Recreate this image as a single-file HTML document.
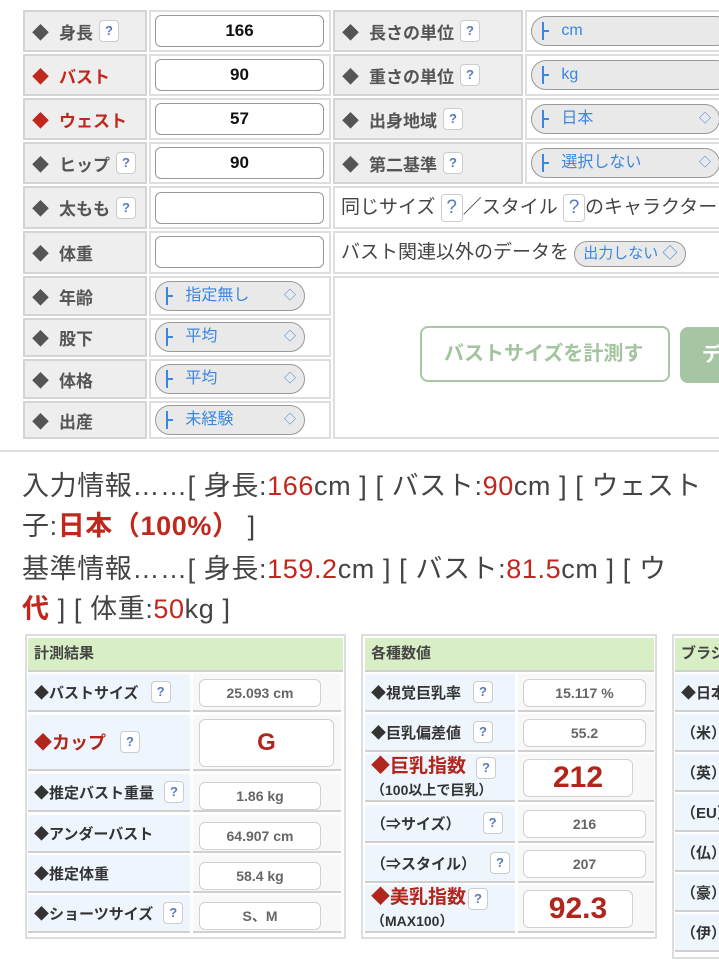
<!DOCTYPE html>
<html><head><meta charset="utf-8"><style>
*{margin:0;padding:0;box-sizing:border-box}
body{width:719px;height:962px;overflow:hidden;background:#fff;position:relative;font-family:"Liberation Sans","Noto Sans CJK JP",sans-serif}
.a{position:absolute}
.lab{position:absolute;background:#eee;border:2px solid #d4d4d4;font-weight:bold;color:#555;font-size:17px;display:flex;align-items:center;padding-left:7px;white-space:nowrap;overflow:hidden}
.lab.r{color:#c0281e}
.d{font-size:17px;margin-right:10px}
.cell{position:absolute;border:2px solid #dedede;background:#fff}
.q{display:inline-block;width:20px;height:22px;border:1px solid #ccc;border-radius:4px;background:#fff;color:#5a7ab8;font-size:13px;text-align:center;line-height:20px;margin-left:6px;font-weight:bold}
.inp{position:absolute;border:1.5px solid #999;border-radius:6px;background:#fff;text-align:center;font-weight:bold;font-size:17px;line-height:29px;color:#111}
.sel{position:absolute;border:1.5px solid #999;border-radius:16px;background:#e9e9e9;color:#3a86e0;font-size:16px;line-height:27px;padding-left:10px;white-space:nowrap;overflow:hidden}
.sel .bar{display:inline-block;width:2px;height:18px;background:#3a86e0;vertical-align:middle;margin-right:4px;position:relative}
.sel .bar:after{content:"";position:absolute;left:2px;top:8px;width:5px;height:2px;background:#3a86e0}
.sel .ar{position:absolute;right:8px;top:0;font-size:12px}
.txt{position:absolute;left:22px;font-size:27px;letter-spacing:0.6px;color:#444;white-space:nowrap;line-height:41px}
.txt b{color:#c0281e;font-weight:normal}
.tb{position:absolute;border:2px solid #ddd;background:#fff}
.hd{position:absolute;background:#d8efc6;border-bottom:2px solid #cfcfcf;font-size:15px;font-weight:bold;color:#444;padding-left:6px;line-height:32px;white-space:nowrap;overflow:hidden}
.tl{position:absolute;background:#eef5fd;border-bottom:2px solid #cfcfcf;font-size:15px;font-weight:bold;color:#333;display:flex;align-items:center;padding-left:6px;white-space:nowrap;overflow:hidden}
.tv{position:absolute;background:#f8f8f8;border-bottom:2px solid #cfcfcf}
.vb{position:absolute;border:1.5px solid #d0d0d0;border-radius:6px;background:#fff;text-align:center;font-weight:bold;color:#666;font-size:14px}
</style></head><body>

<div class="lab" style="left:23px;top:10px;width:124px;height:42px"><span class="d">◆</span>身長<span class="q">?</span></div>
<div class="lab r" style="left:23px;top:54px;width:124px;height:42px"><span class="d">◆</span>バスト</div>
<div class="lab r" style="left:23px;top:98px;width:124px;height:42px"><span class="d">◆</span>ウェスト</div>
<div class="lab" style="left:23px;top:142px;width:124px;height:42px"><span class="d">◆</span>ヒップ<span class="q">?</span></div>
<div class="lab" style="left:23px;top:186px;width:124px;height:43px"><span class="d">◆</span>太もも<span class="q">?</span></div>
<div class="lab" style="left:23px;top:231px;width:124px;height:43px"><span class="d">◆</span>体重</div>
<div class="lab" style="left:23px;top:276px;width:124px;height:40px"><span class="d">◆</span>年齢</div>
<div class="lab" style="left:23px;top:318px;width:124px;height:39px"><span class="d">◆</span>股下</div>
<div class="lab" style="left:23px;top:359px;width:124px;height:40px"><span class="d">◆</span>体格</div>
<div class="lab" style="left:23px;top:401px;width:124px;height:38px"><span class="d">◆</span>出産</div>

<div class="cell" style="left:149px;top:10px;width:182px;height:42px"></div>
<div class="cell" style="left:149px;top:54px;width:182px;height:42px"></div>
<div class="cell" style="left:149px;top:98px;width:182px;height:42px"></div>
<div class="cell" style="left:149px;top:142px;width:182px;height:42px"></div>
<div class="cell" style="left:149px;top:186px;width:182px;height:43px"></div>
<div class="cell" style="left:149px;top:231px;width:182px;height:43px"></div>
<div class="cell" style="left:149px;top:276px;width:182px;height:40px"></div>
<div class="cell" style="left:149px;top:318px;width:182px;height:39px"></div>
<div class="cell" style="left:149px;top:359px;width:182px;height:40px"></div>
<div class="cell" style="left:149px;top:401px;width:182px;height:38px"></div>
<div class="inp" style="left:155px;top:15px;width:169px;height:32px">166</div>
<div class="inp" style="left:155px;top:59px;width:169px;height:32px">90</div>
<div class="inp" style="left:155px;top:103px;width:169px;height:32px">57</div>
<div class="inp" style="left:155px;top:147px;width:169px;height:32px">90</div>
<div class="inp" style="left:155px;top:192px;width:169px;height:32px"></div>
<div class="inp" style="left:155px;top:236px;width:169px;height:32px"></div>
<div class="sel" style="left:155px;top:281px;width:150px;height:30px"><span class="bar"></span>&nbsp;&nbsp;&nbsp;指定無し<span class="ar">◇</span></div>
<div class="sel" style="left:155px;top:322px;width:150px;height:30px"><span class="bar"></span>&nbsp;&nbsp;&nbsp;平均<span class="ar">◇</span></div>
<div class="sel" style="left:155px;top:364px;width:150px;height:30px"><span class="bar"></span>&nbsp;&nbsp;&nbsp;平均<span class="ar">◇</span></div>
<div class="sel" style="left:155px;top:405px;width:150px;height:30px"><span class="bar"></span>&nbsp;&nbsp;&nbsp;未経験<span class="ar">◇</span></div>

<div class="lab" style="left:333px;top:10px;width:190px;height:42px"><span class="d">◆</span>長さの単位<span class="q">?</span></div>
<div class="lab" style="left:333px;top:54px;width:190px;height:42px"><span class="d">◆</span>重さの単位<span class="q">?</span></div>
<div class="lab" style="left:333px;top:98px;width:190px;height:42px"><span class="d">◆</span>出身地域<span class="q">?</span></div>
<div class="lab" style="left:333px;top:142px;width:190px;height:42px"><span class="d">◆</span>第二基準<span class="q">?</span></div>
<div class="cell" style="left:525px;top:10px;width:200px;height:42px"></div>
<div class="cell" style="left:525px;top:54px;width:200px;height:42px"></div>
<div class="cell" style="left:525px;top:98px;width:200px;height:42px"></div>
<div class="cell" style="left:525px;top:142px;width:200px;height:42px"></div>
<div class="sel" style="left:531px;top:16px;width:200px;height:30px"><span class="bar"></span>&nbsp;&nbsp;&nbsp;cm</div>
<div class="sel" style="left:531px;top:60px;width:200px;height:30px"><span class="bar"></span>&nbsp;&nbsp;&nbsp;kg</div>
<div class="sel" style="left:531px;top:104px;width:189px;height:30px"><span class="bar"></span>&nbsp;&nbsp;&nbsp;日本<span class="ar">◇</span></div>
<div class="sel" style="left:531px;top:148px;width:189px;height:30px"><span class="bar"></span>&nbsp;&nbsp;&nbsp;選択しない<span class="ar">◇</span></div>
<div class="cell" style="left:333px;top:186px;width:392px;height:43px;font-size:19px;color:#444;line-height:39px;padding-left:6px;white-space:nowrap">同じサイズ <span style="display:inline-block;border:1px solid #ccc;border-radius:4px;width:22px;text-align:center;line-height:26px;color:#5a7ab8">?</span>／スタイル <span style="display:inline-block;border:1px solid #ccc;border-radius:4px;width:22px;text-align:center;line-height:26px;color:#5a7ab8">?</span>のキャラクター</div>
<div class="cell" style="left:333px;top:231px;width:392px;height:43px;font-size:19px;color:#444;line-height:39px;padding-left:6px;white-space:nowrap">バスト関連以外のデータを <span style="display:inline-block;border:1.5px solid #999;border-radius:14px;background:#e9e9e9;color:#3a86e0;font-size:15px;line-height:24px;padding:0 8px">出力しない ◇</span></div>
<div class="cell" style="left:333px;top:276px;width:392px;height:163px"></div>
<div class="a" style="left:420px;top:326px;width:250px;height:56px;border:2px solid #a8c8a4;border-radius:8px;color:#a3c49f;font-weight:bold;font-size:20px;line-height:52px;padding-left:22px;white-space:nowrap;overflow:hidden;background:#fff">バストサイズを計測す</div>
<div class="a" style="left:680px;top:327px;width:60px;height:56px;background:#a6c5a2;border-radius:8px;color:#fff;font-weight:bold;font-size:20px;line-height:56px;padding-left:22px">デ</div>

<div class="a" style="left:0;top:450px;width:719px;height:2px;background:#ddd"></div>
<div class="txt" style="top:466px">入力情報……[ 身長:<b>166</b>cm ] [ バスト:<b>90</b>cm ] [ ウェスト</div>
<div class="txt" style="top:506px">子:<b style="font-weight:bold">日本（100%）</b> ]</div>
<div class="txt" style="top:549px">基準情報……[ 身長:<b>159.2</b>cm ] [ バスト:<b>81.5</b>cm ] [ ウ</div>
<div class="txt" style="top:589px"><b style="font-weight:bold">代</b> ] [ 体重:<b>50</b>kg ]</div>

<div class="tb" style="left:25px;top:634px;width:321px;height:305px"></div>
<div class="hd" style="left:28px;top:638px;width:315px;height:34px">計測結果</div>
<div class="tl" style="left:28px;top:674px;width:162px;height:38px">◆バストサイズ<span class="q" style="margin-left:12px">?</span></div>
<div class="tv" style="left:193px;top:674px;width:148px;height:38px"></div>
<div class="vb" style="left:199px;top:679px;width:122px;height:28px;line-height:26px">25.093 cm</div>
<div class="tl" style="left:28px;top:715px;width:162px;height:56px;color:#b0261c;font-size:18px">◆カップ<span class="q" style="margin-left:14px">?</span></div>
<div class="tv" style="left:193px;top:715px;width:148px;height:56px"></div>
<div class="vb" style="left:199px;top:719px;width:135px;height:48px;line-height:46px;color:#b0261c;font-size:24px">G</div>
<div class="tl" style="left:28px;top:774px;width:162px;height:38px">◆推定バスト重量<span class="q" style="margin-left:10px">?</span></div>
<div class="tv" style="left:193px;top:774px;width:148px;height:38px"></div>
<div class="vb" style="left:199px;top:782px;width:122px;height:28px;line-height:26px">1.86 kg</div>
<div class="tl" style="left:28px;top:815px;width:162px;height:38px">◆アンダーバスト</div>
<div class="tv" style="left:193px;top:815px;width:148px;height:38px"></div>
<div class="vb" style="left:199px;top:822px;width:122px;height:28px;line-height:26px">64.907 cm</div>
<div class="tl" style="left:28px;top:855px;width:162px;height:38px">◆推定体重</div>
<div class="tv" style="left:193px;top:855px;width:148px;height:38px"></div>
<div class="vb" style="left:199px;top:862px;width:122px;height:28px;line-height:26px">58.4 kg</div>
<div class="tl" style="left:28px;top:895px;width:162px;height:38px">◆ショーツサイズ<span class="q" style="margin-left:10px">?</span></div>
<div class="tv" style="left:193px;top:895px;width:148px;height:38px"></div>
<div class="vb" style="left:199px;top:902px;width:122px;height:28px;line-height:26px">S、M</div>

<div class="tb" style="left:361px;top:634px;width:296px;height:305px"></div>
<div class="hd" style="left:365px;top:638px;width:289px;height:34px">各種数値</div>
<div class="tl" style="left:365px;top:674px;width:150px;height:38px">◆視覚巨乳率<span class="q" style="margin-left:12px">?</span></div>
<div class="tv" style="left:518px;top:674px;width:136px;height:38px"></div>
<div class="vb" style="left:523px;top:679px;width:123px;height:28px;line-height:26px">15.117 %</div>
<div class="tl" style="left:365px;top:714px;width:150px;height:38px">◆巨乳偏差値<span class="q" style="margin-left:12px">?</span></div>
<div class="tv" style="left:518px;top:714px;width:136px;height:38px"></div>
<div class="vb" style="left:523px;top:719px;width:123px;height:28px;line-height:26px">55.2</div>
<div class="tl" style="left:365px;top:754px;width:150px;height:48px;display:block;padding-top:2px;line-height:22px"><span style="color:#b0261c;font-size:19px">◆巨乳指数</span><span class="q" style="margin-left:10px">?</span><br><span style="font-size:14px">（100以上で巨乳）</span></div>
<div class="tv" style="left:518px;top:754px;width:136px;height:48px"></div>
<div class="vb" style="left:523px;top:759px;width:110px;height:38px;line-height:36px;color:#b0261c;font-size:30px">212</div>
<div class="tl" style="left:365px;top:805px;width:150px;height:38px">（⇒サイズ）<span class="q" style="margin-left:22px">?</span></div>
<div class="tv" style="left:518px;top:805px;width:136px;height:38px"></div>
<div class="vb" style="left:523px;top:810px;width:123px;height:28px;line-height:26px">216</div>
<div class="tl" style="left:365px;top:845px;width:150px;height:38px">（⇒スタイル）<span class="q" style="margin-left:14px">?</span></div>
<div class="tv" style="left:518px;top:845px;width:136px;height:38px"></div>
<div class="vb" style="left:523px;top:850px;width:123px;height:28px;line-height:26px">207</div>
<div class="tl" style="left:365px;top:885px;width:150px;height:48px;display:block;padding-top:2px;line-height:22px"><span style="color:#b0261c;font-size:19px">◆美乳指数</span><span class="q" style="margin-left:2px">?</span><br><span style="font-size:14px">（MAX100）</span></div>
<div class="tv" style="left:518px;top:885px;width:136px;height:48px"></div>
<div class="vb" style="left:523px;top:890px;width:110px;height:38px;line-height:36px;color:#b0261c;font-size:30px">92.3</div>

<div class="tb" style="left:672px;top:634px;width:60px;height:325px"></div>
<div class="hd" style="left:675px;top:638px;width:50px;height:34px">ブラジャー</div>
<div class="tl" style="left:675px;top:674px;width:50px;height:38px">◆日本</div>
<div class="tl" style="left:675px;top:714px;width:50px;height:38px">（米）</div>
<div class="tl" style="left:675px;top:754px;width:50px;height:38px">（英）</div>
<div class="tl" style="left:675px;top:794px;width:50px;height:38px">（EU）</div>
<div class="tl" style="left:675px;top:834px;width:50px;height:38px">（仏）</div>
<div class="tl" style="left:675px;top:874px;width:50px;height:38px">（豪）</div>
<div class="tl" style="left:675px;top:914px;width:50px;height:38px">（伊）</div>
</body></html>
